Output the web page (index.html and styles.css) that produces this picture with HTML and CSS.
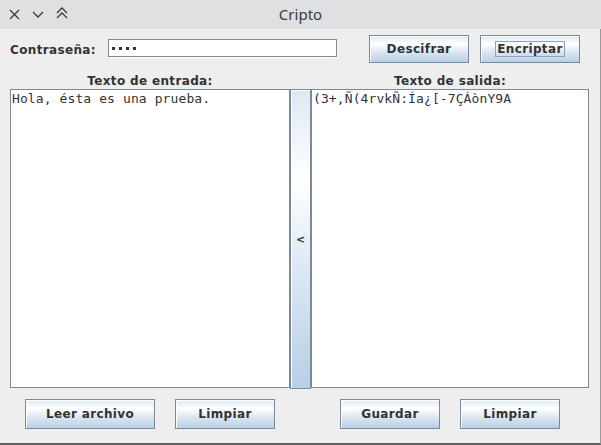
FILE: index.html
```html
<!DOCTYPE html>
<html lang="es">
<head>
<meta charset="utf-8">
<title>Cripto</title>
<link rel="stylesheet" href="styles.css">
</head>
<body>
<div class="window">
  <div class="titlebar">
    <div class="tb-icons">
      <svg class="tb-svg" width="80" height="29" viewBox="0 0 80 29">
        <path d="M10 10 L19 19 M19 10 L10 19" />
        <path d="M33 12 L38 17 L43 12" />
        <path d="M57 13 L62 8 L67 13 M57 18 L62 13 L67 18" />
      </svg>
    </div>
    <div class="title">Cripto</div>
    <div></div>
  </div>
  <div class="content">
    <div class="toprow">
      <span class="lbl">Contraseña:</span>
      <div class="pwfield" aria-label="contraseña"><i class="dot"></i><i class="dot"></i><i class="dot"></i><i class="dot"></i></div>
      <button class="btn b100 first">Descifrar</button>
      <button class="btn b100 second"><span class="focusring">Encriptar</span></button>
    </div>
    <div class="main">
      <div class="heading hl">Texto de entrada:</div>
      <div class="heading hr">Texto de salida:</div>
      <div class="textarea ta-left">Hola, ésta es una prueba.</div>
      <button class="vbtn">&lt;</button>
      <div class="textarea ta-right">(3+,Ñ(4rvkÑ:Ía¿[-7ÇÁònY9A</div>
      <div class="btnrow br-left">
        <button class="btn b130">Leer archivo</button>
        <button class="btn b100">Limpiar</button>
      </div>
      <div class="btnrow br-right">
        <button class="btn b100">Guardar</button>
        <button class="btn b100">Limpiar</button>
      </div>
    </div>
  </div>
</div>
</body>
</html>
```
FILE: styles.css
```css
html, body {
  margin: 0;
  padding: 0;
  background: #eeeeee;
}

.window {
  width: 601px;
  height: 445px;
  display: flex;
  flex-direction: column;
  background: #eeeeee;
  font-family: "DejaVu Sans", sans-serif;
  color: #333333;
  box-sizing: border-box;
}

.titlebar {
  height: 29px;
  flex: none;
  background: #dfe0e2;
  display: grid;
  grid-template-columns: 1fr auto 1fr;
  align-items: center;
}

.tb-icons {
  height: 29px;
}

.tb-svg {
  display: block;
}

.tb-svg path {
  fill: none;
  stroke: #3a3a3a;
  stroke-width: 1.3;
}

.title {
  font-family: "Noto Sans", sans-serif;
  font-size: 15px;
  color: #3b3b3b;
  line-height: 29px;
}

.content {
  flex: 1;
  border-right: 1px solid #9a9a9a;
  border-bottom: 2px solid #5f5f5f;
  padding: 6px 0 0 10px;
}

.toprow {
  display: flex;
  align-items: flex-start;
  height: 28px;
}

.lbl {
  width: 98px;
  font-weight: bold;
  font-size: 12px;
  letter-spacing: 0.35px;
  line-height: 14px;
  margin-top: 8px;
  color: #333333;
}

.pwfield {
  box-sizing: border-box;
  width: 229px;
  height: 18px;
  margin-top: 4px;
  background: #ffffff;
  border: 1px solid #7a8a99;
  box-shadow: 1px 1px 0 #ffffff;
  display: flex;
  align-items: center;
  padding-left: 3px;
  gap: 4px;
}

.dot {
  display: block;
  width: 3px;
  height: 3px;
  background: #333333;
}

.btn {
  box-sizing: border-box;
  height: 28px;
  padding: 0;
  margin: 0;
  border: 1px solid #7a8a99;
  background: linear-gradient(to bottom, #dde8f3 0%, #ffffff 30%, #dde8f3 60%, #b8cfe5 100%);
  box-shadow: inset 1px 1px 0 #ffffff;
  font-family: "DejaVu Sans", sans-serif;
  font-weight: bold;
  font-size: 12px;
  letter-spacing: 0.35px;
  color: #333333;
  display: flex;
  align-items: center;
  justify-content: center;
}

.b100 {
  width: 100px;
}

.b130 {
  width: 130px;
}

.first {
  margin-left: 32px;
}

.second {
  margin-left: 11px;
}

.focusring {
  border: 1px solid #8fa2b6;
  padding: 0 1px;
  line-height: 14px;
}

.main {
  margin-top: 11px;
  display: grid;
  grid-template-columns: 280px 21px 278px;
  grid-template-rows: 15px 300px auto;
}

.heading {
  font-weight: bold;
  font-size: 12px;
  letter-spacing: 0.35px;
  line-height: 15px;
  text-align: center;
  color: #333333;
}

.hl {
  grid-column: 1;
  grid-row: 1;
}

.hr {
  grid-column: 3;
  grid-row: 1;
}

.textarea {
  box-sizing: border-box;
  height: 299px;
  background: #ffffff;
  border: 1px solid #7a8a99;
  padding: 1px 1px;
  font-family: "DejaVu Sans Mono", monospace;
  font-size: 13px;
  letter-spacing: 0.1px;
  line-height: 15px;
  color: #333333;
  white-space: pre;
  overflow: hidden;
}

.ta-left {
  grid-column: 1;
  grid-row: 2;
}

.ta-right {
  grid-column: 3;
  grid-row: 2;
}

.vbtn {
  grid-column: 2;
  grid-row: 2;
  box-sizing: border-box;
  width: 21px;
  height: 300px;
  padding: 0;
  margin: 0;
  border: 1px solid #7a8a99;
  background: linear-gradient(to bottom, #dde8f3 0%, #ffffff 30%, #dde8f3 60%, #b8cfe5 100%);
  box-shadow: inset 1px 1px 0 #ffffff;
  font-family: "DejaVu Sans", sans-serif;
  font-weight: bold;
  font-size: 11px;
  color: #333333;
}

.btnrow {
  grid-row: 3;
  display: flex;
  justify-content: center;
  gap: 20px;
  padding-top: 10px;
}

.btnrow .btn {
  height: 30px;
}

.br-left {
  grid-column: 1;
}

.br-right {
  grid-column: 3;
}
```
